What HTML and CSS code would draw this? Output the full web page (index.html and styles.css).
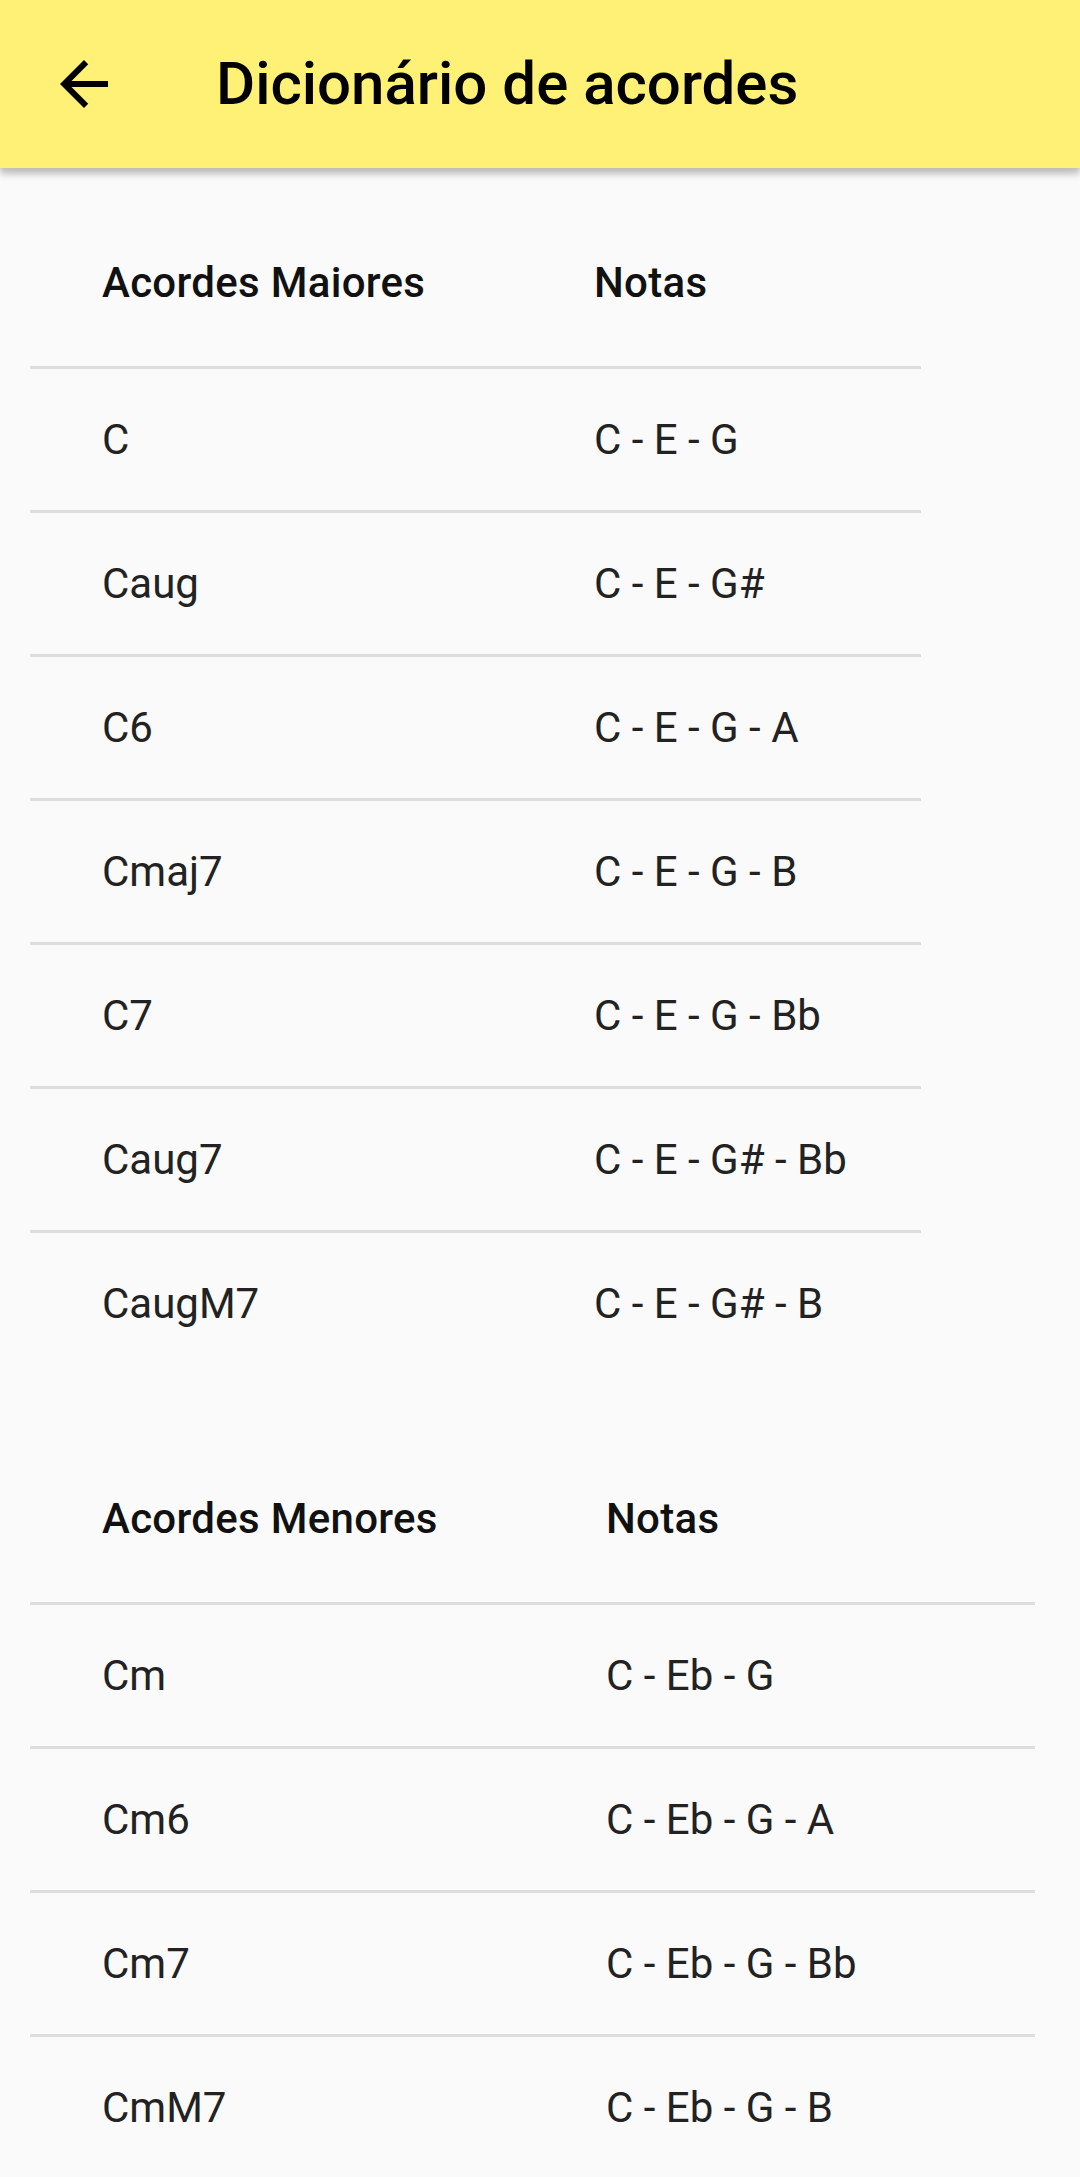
FILE: index.html
```html
<!DOCTYPE html>
<html lang="pt">
<head>
<meta charset="utf-8">
<title>Dicionário de acordes</title>
<link rel="stylesheet" href="styles.css">
</head>
<body>
<header class="appbar">
  <button class="back" aria-label="Voltar">
    <svg viewBox="0 0 24 24" width="72" height="72"><path d="M20 11H7.83l5.59-5.59L12 4l-8 8 8 8 1.41-1.41L7.83 13H20v-2z" fill="#000"/></svg>
  </button>
  <h1 class="title">Dicionário de acordes</h1>
</header>
<main class="content">
  <table class="chords major">
    <thead>
      <tr class="head-row"><th class="c1">Acordes Maiores</th><th class="c2">Notas</th></tr>
    </thead>
    <tbody>
      <tr><td class="c1">C</td><td class="c2">C - E - G</td></tr>
      <tr><td class="c1">Caug</td><td class="c2">C - E - G#</td></tr>
      <tr><td class="c1">C6</td><td class="c2">C - E - G - A</td></tr>
      <tr><td class="c1">Cmaj7</td><td class="c2">C - E - G - B</td></tr>
      <tr><td class="c1">C7</td><td class="c2">C - E - G - Bb</td></tr>
      <tr><td class="c1">Caug7</td><td class="c2">C - E - G# - Bb</td></tr>
      <tr><td class="c1">CaugM7</td><td class="c2">C - E - G# - B</td></tr>
    </tbody>
  </table>
  <table class="chords minor">
    <thead>
      <tr class="head-row"><th class="c1">Acordes Menores</th><th class="c2">Notas</th></tr>
    </thead>
    <tbody>
      <tr><td class="c1">Cm</td><td class="c2">C - Eb - G</td></tr>
      <tr><td class="c1">Cm6</td><td class="c2">C - Eb - G - A</td></tr>
      <tr><td class="c1">Cm7</td><td class="c2">C - Eb - G - Bb</td></tr>
      <tr><td class="c1">CmM7</td><td class="c2">C - Eb - G - B</td></tr>
    </tbody>
  </table>
</main>
</body>
</html>
```
FILE: styles.css
```css
html, body {
  margin: 0;
  padding: 0;
  height: 2177px;
  overflow: hidden;
  background: #fafafa;
  font-family: Roboto, "Liberation Sans", Arial, sans-serif;
}

.appbar {
  position: relative;
  z-index: 2;
  height: 168px;
  background: #fff176;
  display: flex;
  align-items: center;
  box-shadow: 0 6px 6px rgba(0, 0, 0, 0.18), 0 3px 12px rgba(0, 0, 0, 0.12);
}

.back {
  width: 72px;
  height: 72px;
  margin-left: 48px;
  padding: 0;
  border: 0;
  background: none;
  display: flex;
}

.title {
  margin: 0 0 0 96px;
  font-size: 60px;
  font-weight: 500;
  color: #000;
  line-height: 72px;
}

.content {
  padding: 30px;
  display: flex;
  flex-direction: column;
  gap: 60px;
}

.chords {
  border-collapse: collapse;
  table-layout: fixed;
  font-size: 42px;
}

.major { width: 891px; }
.minor { width: 1005px; }

.chords th,
.chords td {
  padding: 0;
  text-align: left;
  vertical-align: middle;
  white-space: nowrap;
}

.chords th {
  height: 168px;
  font-weight: 500;
  letter-spacing: 0.3px;
  color: #111;
}

.chords td {
  height: 141px;
  border-top: 3px solid #dedede;
  color: #222;
}

.chords .c1 { padding-left: 72px; }
.chords .c2 { padding-left: 168px; padding-right: 72px; }

.major .c1 { width: 324px; }
.major .c2 { width: 255px; }
.minor .c1 { width: 336px; }
.minor .c2 { width: 357px; }
```
